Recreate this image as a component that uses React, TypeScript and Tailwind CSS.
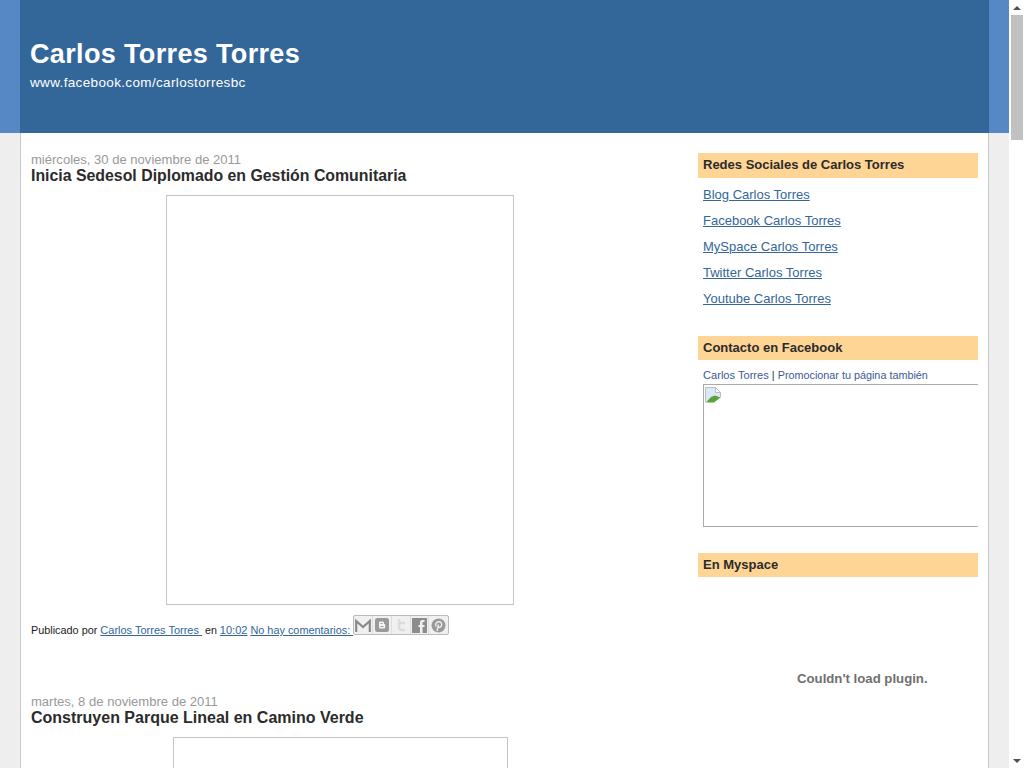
const sidebarLinks = [
  'Blog Carlos Torres',
  'Facebook Carlos Torres',
  'MySpace Carlos Torres',
  'Twitter Carlos Torres',
  'Youtube Carlos Torres',
]

function ShareButton({ children, last }: { children: React.ReactNode; last?: boolean }) {
  return (
    <span className={`flex h-[18px] w-[19px] items-center justify-center ${last ? '' : 'border-r border-[#ddd]'}`}>
      {children}
    </span>
  )
}

function ShareButtons() {
  return (
    <span className="flex h-[20px] w-[96px] overflow-hidden rounded-[2px] border border-[#bbb] bg-[#f0f0f0]">
      <ShareButton>
        <svg width="16" height="13" viewBox="0 0 16 13" fill="none" stroke="#8a8a8a" strokeWidth="2.200">
          <path d="M1.200 13V2l6.800 6 6.800-6v11" />
        </svg>
      </ShareButton>
      <ShareButton>
        <svg width="14" height="14" viewBox="0 0 14 14">
          <rect width="14" height="14" rx="2.500" fill="#999" />
          <path d="M4 5c0-1 .6-1.500 1.500-1.500h2C8.400 3.500 9 4 9 5v1h.5c.4 0 .7.300.7.700V9c0 1-.7 1.500-1.600 1.500h-3C4.600 10.500 4 10 4 9z" fill="#f4f4f4" />
          <path d="M5.500 5.500h2M5.500 8.500h3" stroke="#999" />
        </svg>
      </ShareButton>
      <ShareButton>
        <svg width="14" height="14" viewBox="0 0 14 14" fill="none" stroke="#dcdcdc" strokeWidth="2.400">
          <path d="M5 1v8c0 2 1 3 3 3h3M5 5h6" />
        </svg>
      </ShareButton>
      <ShareButton>
        <svg width="15" height="15" viewBox="0 0 15 15">
          <rect width="15" height="15" fill="#8c8c8c" />
          <path d="M10.500 15V9h2V7h-2V5c0-.7.3-1 1-1h1V2h-2C8.800 2 8 3 8 4.800V7H6.500v2H8v6z" fill="#f0f0f0" />
        </svg>
      </ShareButton>
      <ShareButton last>
        <svg width="15" height="15" viewBox="0 0 15 15">
          <circle cx="7.500" cy="7.500" r="7" fill="#999" />
          <path d="M6 13l1.500-6.500M5 8.500C3.800 6 5.500 3.800 7.800 3.800c2.200 0 3.300 1.600 2.800 3.600-.4 1.800-2.400 2.600-3.400 1.300" fill="none" stroke="#f0f0f0" strokeWidth="1.400" />
        </svg>
      </ShareButton>
    </span>
  )
}

function BrokenImage() {
  return (
    <svg width="16" height="16" viewBox="0 0 16 16" className="ml-px mt-[2px]">
      <path d="M.5 15.500V.500h10l5 5v5" fill="#dce8f8" stroke="#bdbdbd" />
      <path d="M10.500.500v5h5z" fill="#fff" stroke="#bdbdbd" />
      <path d="M1 15.500l5-5.500 4-1.500 5.500 2-3 5z" fill="#5aa03c" />
      <path d="M9 15.500l6.500-5V16H9z" fill="#fff" />
    </svg>
  )
}

function WidgetTitle({ children, tall }: { children: React.ReactNode; tall?: boolean }) {
  return (
    <h2 className={`flex items-center bg-[#ffd595] pl-[5px] text-[13px] font-bold text-[#2b2b2b] ${tall ? 'h-[25px] pb-[2px]' : 'h-[24px]'}`}>
      {children}
    </h2>
  )
}

export default function App() {
  return (
    <div className="flex h-[768px] w-[1024px] overflow-hidden bg-[#eeeeee] font-['Liberation_Sans',Arial,sans-serif] text-[13px] text-[#222]">
      <div className="flex w-[1009px] flex-col">
        <div className="h-[133px] bg-[#5588c4] px-[20px]">
          <header className="h-[133px] w-[969px] border-r border-[#2f6098] bg-[#336699] pl-[10px] pt-[38px] text-white">
            <h1 className="text-[27px] font-bold leading-[33px] tracking-[0.35px]">Carlos Torres Torres</h1>
            <p className="mt-[3px] text-[13.500px] leading-[18px] tracking-[0.35px]">www.facebook.com/carlostorresbc</p>
          </header>
        </div>

        <div className="mx-[20px] flex h-[635px] w-[969px] border-x border-[#c8c8c8] bg-white">
          <main className="ml-[10px] w-[618px] pt-[19px]">
            <p className="text-[13.050px] leading-[15px] text-[#999]">miércoles, 30 de noviembre de 2011</p>
            <h3 className="text-[15.870px] font-bold leading-[17px] text-[#2b2b2b]">
              Inicia Sedesol Diplomado en Gestión Comunitaria
            </h3>
            <div className="mx-auto mt-[11px] h-[410px] w-[348px] border border-[#c4c4c4]" />
            <div className="mt-[10px] flex h-[20px] items-start text-[11px] leading-[13px]">
              <p className="mt-[9px] whitespace-pre">
                <span className="text-[10.850px]">Publicado por </span>
                <a className="text-[#336699] underline">Carlos Torres Torres </a>
                <span className="text-[10.700px]"> en </span>
                <a className="text-[#336699] underline">10:02</a>
                <a className="ml-[3px] text-[10.900px] text-[#336699] underline">No hay comentarios: </a>
              </p>
              <ShareButtons />
            </div>
            <p className="mt-[59px] text-[13.050px] leading-[15px] text-[#999]">martes, 8 de noviembre de 2011</p>
            <h3 className="text-[16px] font-bold leading-[17px] text-[#2b2b2b]">
              Construyen Parque Lineal en Camino Verde
            </h3>
            <div className="mx-auto mt-[11px] h-[100px] w-[335px] border border-[#c4c4c4]" />
          </main>

          <aside className="ml-[49px] w-[280px] pt-[20px]">
            <WidgetTitle tall>Redes Sociales de Carlos Torres</WidgetTitle>
            <ul className="mt-[4px] flex flex-col pl-[5px]">
              {sidebarLinks.map((link) => (
                <li key={link} className="h-[26px] leading-[25px]">
                  <a className="text-[#336699] underline">{link}</a>
                </li>
              ))}
            </ul>

            <div className="mt-[24px]">
              <WidgetTitle>Contacto en Facebook</WidgetTitle>
              <p className="mt-[8px] whitespace-pre pl-[5px] text-[11px] leading-[15px] text-[#3b5998]">
                <a className="text-[11.100px]">Carlos Torres</a>
                <span className="text-[#333]"> | </span>
                <a className="text-[10.800px]">Promocionar tu página también</a>
              </p>
              <div className="mb-[26px] ml-[5px] mt-[1px] h-[143px] w-[275px] border-y border-l border-[#aaa]">
                <BrokenImage />
              </div>
            </div>

            <WidgetTitle>En Myspace</WidgetTitle>
            <p className="mt-[94px] pl-[99px] text-[13.200px] font-bold leading-[16px] text-[#707070]">Couldn't load plugin.</p>
          </aside>
        </div>
      </div>

      <div className="flex w-[15px] flex-col bg-white">
        <div className="flex h-[15px] items-center justify-center">
          <span className="h-0 w-0 border-x-[4px] border-b-[4px] border-x-transparent border-b-[#505050]" />
        </div>
        <div className="ml-[2px] h-[125px] w-[12px] bg-[#c1c1c1]" />
        <div className="flex-1" />
        <div className="flex h-[15px] items-center justify-center">
          <span className="h-0 w-0 border-x-[4px] border-t-[4px] border-x-transparent border-t-[#505050]" />
        </div>
      </div>
    </div>
  )
}
